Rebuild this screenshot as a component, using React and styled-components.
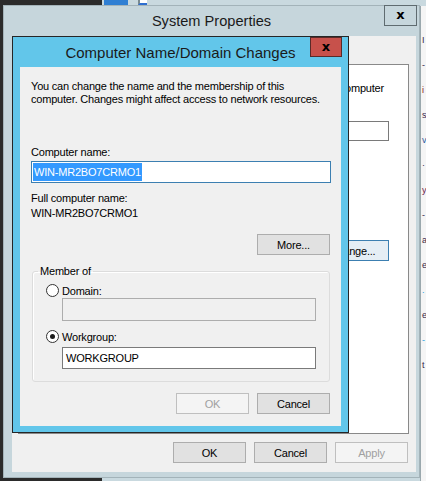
import styled, { createGlobalStyle } from 'styled-components'

const GlobalStyle = createGlobalStyle`
  html, body {
    margin: 0;
    padding: 0;
    background: #2b2b2b;
    overflow: hidden;
  }
  * {
    box-sizing: border-box;
  }
`

const Desktop = styled.div`
  position: relative;
  width: 426px;
  height: 481px;
  overflow: hidden;
  background: #2b2b2b;
  font-family: "Liberation Sans", Arial, sans-serif;
  font-size: 11px;
  letter-spacing: -0.2px;
  color: #000;
`

/* window sitting behind everything, seen only on the top/right/bottom edges */
const BackWindow = styled.div`
  position: absolute;
  left: 102px;
  top: 0;
  right: 0;
  bottom: 0;
  background: #c9d9df;
  display: flex;
  flex-direction: column;
`

const BackTopRow = styled.div`
  display: flex;
  align-items: flex-start;
  gap: 10px;
  padding-left: 2px;
  height: 6px;
`

const BackTile = styled.div`
  width: 24px;
  height: 5px;
  background: #2f7fd3;
`

const BackCheck = styled.div`
  width: 9px;
  height: 5px;
  background: #fff;
  border-left: 2px solid #7a8a90;
  border-bottom: 2px solid #2f6fd0;
`

const BackPane = styled.div`
  margin-left: 318px;
  flex: 1;
  background: #f5f5f5;
  border-left: 1px solid #9aa8ad;
  padding-top: 28px;
  padding-left: 1px;
  display: flex;
  flex-direction: column;
  gap: 12px;
  white-space: nowrap;
`

const BackLine = styled.div`
  height: 13px;
  line-height: 13px;
  font-size: 9px;
  color: ${p => p.$color || '#3a2a4a'};
`

const Window = styled.div`
  position: absolute;
  left: 3px;
  top: 5px;
  width: 417px;
  height: 473px;
  background: #c6d6dc;
  border: 1px solid #a3b3b9;
  display: flex;
  flex-direction: column;
`

const TitleBar = styled.div`
  display: grid;
  grid-template-columns: 1fr auto 1fr;
  height: ${p => p.$height}px;
  flex: none;
`

const Title = styled.div`
  grid-column: 2;
  align-self: center;
  font-size: ${p => p.$size}px;
  letter-spacing: 0;
  color: #1a1a1a;
  white-space: nowrap;
`

const CloseButton = styled.div`
  grid-column: 3;
  justify-self: end;
  align-self: start;
  width: ${p => p.$w}px;
  height: ${p => p.$h}px;
  margin-right: ${p => p.$mr}px;
  margin-top: ${p => p.$mt || 0}px;
  background: ${p => p.$bg};
  border: 1px solid ${p => p.$border};
  display: flex;
  align-items: center;
  justify-content: center;
  font-family: "DejaVu Sans", sans-serif;
  font-weight: bold;
  font-size: 13px;
  letter-spacing: 0;
  line-height: 1;
  color: #000;
  padding-bottom: 2px;
`

const WindowBody = styled.div`
  flex: 1;
  margin: 0 3px 5px 8px;
  background: #f0f0f0;
  display: flex;
  flex-direction: column;
  padding: 28px 7px 9px 6px;
`

const TabPanel = styled.div`
  flex: 1;
  background: #fff;
  border: 1px solid #898989;
  display: flex;
  flex-direction: column;
  align-items: flex-end;
  padding: 17px 19px 0 14px;
`

const PanelText = styled.div`
  line-height: 13px;
  white-space: nowrap;
  margin-right: ${p => p.$mr || 0}px;
`

const DescRow = styled.div`
  display: flex;
  align-items: center;
  gap: 10px;
  margin-top: 26px;
`

const Button = styled.div`
  width: 73px;
  height: 21px;
  flex: none;
  display: flex;
  align-items: center;
  justify-content: center;
  background: ${p => (p.$disabled ? '#f4f4f4' : p.$default ? '#e5eef5' : '#e1e1e1')};
  border: 1px solid ${p => (p.$disabled ? '#bfbfbf' : p.$default ? '#3c7fb1' : '#adadad')};
  color: ${p => (p.$disabled ? '#a0a0a0' : '#000')};
  white-space: nowrap;
  margin-top: ${p => p.$mt || 0}px;
  margin-right: ${p => p.$mr || 0}px;
  align-self: ${p => p.$self || 'auto'};
`

const ButtonRow = styled.div`
  display: flex;
  justify-content: flex-end;
  gap: 8px;
  margin-top: ${p => p.$mt}px;
  padding-right: ${p => p.$pr}px;
`

const Dialog = styled.div`
  position: absolute;
  left: 12px;
  top: 36px;
  width: 337px;
  height: 397px;
  background: #62c6ea;
  border: 1px solid #262626;
  display: flex;
  flex-direction: column;
`

const DialogBody = styled.div`
  flex: 1;
  margin: 0 7px 6px 7px;
  background: #f0f0f0;
  display: flex;
  flex-direction: column;
  padding: 13px 0 0 11px;
`

const Text = styled.div`
  line-height: ${p => p.$lh || 13}px;
  margin-top: ${p => p.$mt || 0}px;
  white-space: nowrap;
`

const TextBox = styled.div`
  width: ${p => p.$w}px;
  height: ${p => p.$h || 22}px;
  margin-top: ${p => p.$mt || 0}px;
  margin-left: ${p => p.$ml || 0}px;
  flex: none;
  background: ${p => (p.$disabled ? '#f0f0f0' : '#fff')};
  border: 1px solid ${p => (p.$focused ? '#3c7fb1' : p.$disabled ? '#adadad' : '#7a7a7a')};
  display: flex;
  align-items: center;
  padding-left: ${p => p.$pl || 2}px;
  white-space: nowrap;
`

const Selection = styled.span`
  background: #3399ff;
  color: #fff;
  line-height: 18px;
  padding: 0 1px;
`

const GroupBox = styled.fieldset`
  margin: 10px 0 0 1px;
  padding: 6px 0 12px 13px;
  width: 298px;
  min-inline-size: 0;
  border: 1px solid #dcdcdc;
  border-radius: 3px;
  box-shadow: inset 1px 1px 0 #fff;
  display: flex;
  flex-direction: column;
`

const Legend = styled.legend`
  margin-left: -8px;
  padding: 0 2px;
  line-height: 13px;
`

const RadioRow = styled.label`
  display: flex;
  align-items: center;
  gap: 3px;
  height: 13px;
  margin-top: ${p => p.$mt || 0}px;
`

const RadioCircle = styled.span`
  width: 13px;
  height: 13px;
  border-radius: 50%;
  border: 1px solid #333;
  background: #fff;
  display: flex;
  align-items: center;
  justify-content: center;

  &::after {
    content: '';
    width: 5px;
    height: 5px;
    border-radius: 50%;
    background: ${p => (p.$checked ? '#1a1a1a' : 'transparent')};
  }
`

function Radio({ label, checked, mt }) {
  return (
    <RadioRow $mt={mt}>
      <RadioCircle $checked={checked} />
      <span>{label}</span>
    </RadioRow>
  )
}

export default function App() {
  return (
    <>
      <GlobalStyle />
      <Desktop>
        <BackWindow>
          <BackTopRow>
            <BackTile />
            <BackCheck />
          </BackTopRow>
          <BackPane>
            <BackLine>I</BackLine>
            <BackLine>-</BackLine>
            <BackLine $color="#8a2020">i</BackLine>
            <BackLine>s</BackLine>
            <BackLine $color="#2a5aa0">v</BackLine>
            <BackLine>·</BackLine>
            <BackLine $color="#6a1a4a">y</BackLine>
            <BackLine>-</BackLine>
            <BackLine>a</BackLine>
            <BackLine>e</BackLine>
            <BackLine $color="#2aa0e0">.</BackLine>
            <BackLine>e</BackLine>
            <BackLine $color="#2aa0e0">-</BackLine>
            <BackLine>t</BackLine>
          </BackPane>
        </BackWindow>

        <Window>
          <TitleBar $height={30}>
            <Title $size={14.6}>System Properties</Title>
            <CloseButton $w={33} $h={21} $mr={2} $mt={-1} $bg="#c6d6dc" $border="#5f6b70">x</CloseButton>
          </TitleBar>
          <WindowBody>
            <TabPanel>
              <PanelText $mr={5}>your computer</PanelText>
              <DescRow>
                <span>Computer description:</span>
                <TextBox $w={230} $h={20} />
              </DescRow>
              <Button $default $mt={99}>Change...</Button>
            </TabPanel>
            <ButtonRow $mt={8} $pr={1}>
              <Button>OK</Button>
              <Button>Cancel</Button>
              <Button $disabled>Apply</Button>
            </ButtonRow>
          </WindowBody>
        </Window>

        <Dialog>
          <TitleBar $height={30}>
            <Title $size={15}>Computer Name/Domain Changes</Title>
            <CloseButton $w={32} $h={20} $mr={6} $bg="#c7514b" $border="#5a2a28">x</CloseButton>
          </TitleBar>
          <DialogBody>
            <Text>You can change the name and the membership of this</Text>
            <Text>computer. Changes might affect access to network resources.</Text>

            <Text $mt={40}>Computer name:</Text>
            <TextBox $w={300} $mt={2} $focused $pl={1}>
              <Selection>WIN-MR2BO7CRMO1</Selection>
            </TextBox>

            <Text $mt={8} $lh={15}>Full computer name:</Text>
            <Text $lh={15}>WIN-MR2BO7CRMO1</Text>

            <Button $mt={13} $mr={11} $self="flex-end">More...</Button>

            <GroupBox>
              <Legend>Member of</Legend>
              <Radio label="Domain:" />
              <TextBox $w={254} $h={23} $ml={16} $mt={1} $disabled />
              <Radio label="Workgroup:" checked mt={9} />
              <TextBox $w={254} $ml={16} $mt={4} $pl={3}>WORKGROUP</TextBox>
            </GroupBox>

            <ButtonRow $mt={11} $pr={11}>
              <Button $disabled>OK</Button>
              <Button>Cancel</Button>
            </ButtonRow>
          </DialogBody>
        </Dialog>
      </Desktop>
    </>
  )
}
